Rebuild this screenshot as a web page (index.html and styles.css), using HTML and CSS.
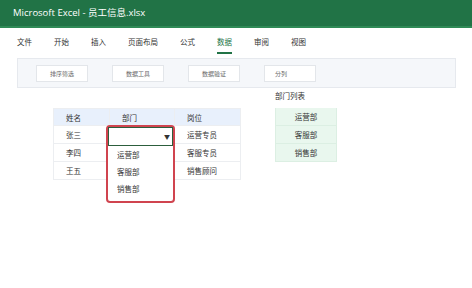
FILE: index.html
```html
<!DOCTYPE html>
<html lang="zh">
<head>
  <meta charset="UTF-8" />
  <title>Microsoft Excel - 员工信息.xlsx</title>
  <link rel="stylesheet" href="styles.css">
</head>
<body>
  <div class="titlebar">Microsoft Excel - 员工信息.xlsx</div>

  <div class="tabs">
    <span class="tab">文件</span>
    <span class="tab">开始</span>
    <span class="tab">插入</span>
    <span class="tab">页面布局</span>
    <span class="tab">公式</span>
    <span class="tab active">数据</span>
    <span class="tab">审阅</span>
    <span class="tab">视图</span>
  </div>

  <div class="ribbon">
    <div class="rbtn">排序筛选</div>
    <div class="rbtn">数据工具</div>
    <div class="rbtn">数据验证</div>
    <div class="rbtn">分列</div>
  </div>

  <div class="sheet">
    <div class="grid-wrap">
      <table class="grid">
        <tr class="head">
          <td class="c1">姓名</td>
          <td class="c2">部门</td>
          <td class="c3">岗位</td>
        </tr>
        <tr>
          <td>张三</td>
          <td class="cell-select"></td>
          <td>运营专员</td>
        </tr>
        <tr>
          <td>李四</td>
          <td></td>
          <td>客服专员</td>
        </tr>
        <tr>
          <td>王五</td>
          <td></td>
          <td>销售顾问</td>
        </tr>
      </table>

      <div class="dropdown">
        <div class="select-box"><span class="arrow">▼</span></div>
        <div class="opt">运营部</div>
        <div class="opt">客服部</div>
        <div class="opt">销售部</div>
      </div>
    </div>

    <div class="deptlist">
      <div class="dl-title">部门列表</div>
      <div class="dl-item">运营部</div>
      <div class="dl-item">客服部</div>
      <div class="dl-item">销售部</div>
    </div>
  </div>
</body>
</html>
```

FILE: styles.css
```css
body {
  margin: 0;
  padding: 0;
  font-family: 'Open Sans', 'Noto Sans CJK SC', sans-serif;
  background: #fff;
  color: #333;
  width: 472px;
  height: 288px;
  overflow: hidden;
}
.titlebar {
  height: 26px;
  background: #217346;
  border-bottom: 2px solid #2f8a56;
  color: #fff;
  font-size: 9.5px;
  line-height: 26px;
  padding-left: 13px;
}
.tabs {
  display: flex;
  height: 27px;
  align-items: center;
  padding-left: 17px;
  font-size: 7.5px;
  font-family: 'Noto Sans CJK SC', sans-serif;
}
.tab {
  margin-right: 22px;
  line-height: 12px;
  color: #333;
  position: relative;
}
.tab.active {
  color: #217346;
}
.tab.active::after {
  content: "";
  position: absolute;
  left: 0;
  right: 0;
  bottom: -6px;
  height: 2px;
  background: #217346;
}
.ribbon {
  margin: 3px 16px 0 17px;
  height: 28px;
  background: #f5f7fa;
  border: 1px solid #e6e9ee;
  display: flex;
  align-items: center;
  padding-left: 18px;
  gap: 24px;
}
.rbtn {
  width: 52px;
  height: 17px;
  box-sizing: border-box;
  background: #fff;
  border: 1px solid #e3e6ea;
  font-size: 6px;
  color: #666;
  font-family: 'Noto Sans CJK SC', sans-serif;
  line-height: 15px;
  text-align: center;
}
.rbtn:last-child {
  text-align: left;
  padding-left: 10px;
}
.sheet {
  display: flex;
  padding-left: 53px;
  margin-top: 2px;
}
.grid-wrap {
  position: relative;
  margin-top: 18px;
}
.grid {
  border-collapse: collapse;
  font-family: 'Noto Sans CJK SC', sans-serif;
  font-size: 7.5px;
  color: #333;
}
.grid td {
  border: 1px solid #eceef1;
  height: 17px;
  padding: 0 0 0 12px;
}
.grid .head td {
  background: #e8f0fc;
  height: 16px;
}
.grid .c1 { width: 43px; }
.grid .c2 { width: 52px; }
.grid .c3 { width: 53px; }
.dropdown {
  position: absolute;
  left: 53px;
  top: 17px;
  width: 65px;
  height: 74px;
  border: 2px solid #d0444f;
  border-radius: 4px;
  background: #fff;
  font-family: 'Noto Sans CJK SC', sans-serif;
  font-size: 7.5px;
  color: #333;
}
.select-box {
  height: 17px;
  border: 1px solid #2c5e3d;
  display: flex;
  justify-content: flex-end;
  align-items: center;
  padding-right: 2px;
}
.arrow {
  font-size: 6px;
  color: #333;
}
.opt {
  padding-left: 9px;
  height: 17px;
  line-height: 17px;
}
.opt:first-of-type {
  margin-top: 1px;
}
.deptlist {
  margin-left: 34px;
  font-family: 'Noto Sans CJK SC', sans-serif;
  font-size: 7.5px;
}
.dl-title {
  height: 12px;
  line-height: 12px;
  color: #333;
  margin-bottom: 6px;
}
.dl-item {
  width: 60px;
  height: 17px;
  line-height: 17px;
  background: #e9f7ee;
  border: 1px solid #dcefe3;
  border-top: none;
  text-align: center;
}
.dl-item:first-of-type {
  border-top: 1px solid #dcefe3;
}
```
